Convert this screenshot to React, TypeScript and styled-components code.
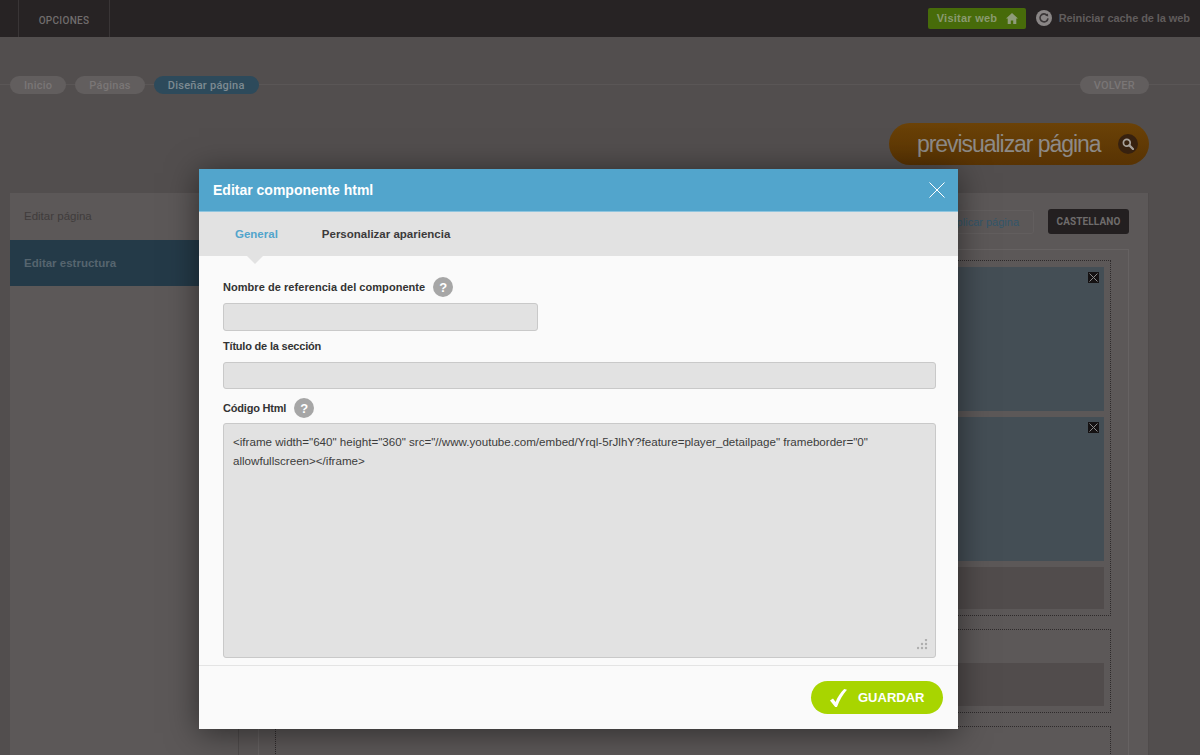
import React from "react";
import styled, { createGlobalStyle } from "styled-components";

const GlobalStyle = createGlobalStyle`
  html, body {
    margin: 0;
    padding: 0;
    height: 100%;
    overflow: hidden;
    background: #524e4e;
    font-family: "Liberation Sans", Arial, sans-serif;
  }
  * { box-sizing: border-box; }
`;

const Page = styled.div`
  position: relative;
  width: 1200px;
  height: 755px;
  overflow: hidden;
  display: flex;
  flex-direction: column;
`;

const TopBar = styled.header`
  height: 37px;
  flex: none;
  display: flex;
  align-items: center;
  justify-content: space-between;
  padding: 0 10px 0 18px;
  background: #272324;
`;

const MenuItem = styled.div`
  width: 92px;
  height: 37px;
  display: flex;
  align-items: center;
  justify-content: center;
  border-left: 1px solid #393536;
  border-right: 1px solid #393536;
  font-family: Roboto, sans-serif;
  font-size: 10px;
  font-weight: 500;
  letter-spacing: 0.3px;
  color: #716d6d;
  padding-top: 4px;
`;

const TopActions = styled.div`
  display: flex;
  align-items: center;
  margin-top: -1px;
`;

const VisitButton = styled.div`
  width: 98px;
  height: 21px;
  display: flex;
  align-items: center;
  gap: 9px;
  padding-left: 9px;
  border-radius: 2px;
  background: #476b0a;
  color: #8a9a70;
  font-size: 11px;
  font-weight: 700;
  letter-spacing: 0.25px;
`;

const CacheLink = styled.div`
  display: flex;
  align-items: center;
  gap: 7px;
  margin-left: 10px;
  color: #605c5c;
  font-size: 11px;
  font-weight: 700;
  letter-spacing: -0.08px;
`;

const Crumbs = styled.nav`
  position: relative;
  flex: none;
  height: 18px;
  margin-top: 39px;
  padding: 0 51px 0 10px;
  display: flex;
  gap: 9px;

  &::before {
    content: "";
    position: absolute;
    left: 0;
    right: 0;
    top: 8px;
    height: 1px;
    background: #5a5656;
  }
`;

const Crumb = styled.span<{ $active?: boolean; $push?: boolean }>`
  position: relative;
  height: 18px;
  padding: 0 14px;
  display: flex;
  align-items: center;
  border-radius: 9px;
  font-family: Roboto, sans-serif;
  font-size: 11px;
  font-weight: 500;
  letter-spacing: 0.25px;
  background: ${(p) => (p.$active ? "#2d4a5b" : "#625e5e")};
  color: ${(p) => (p.$active ? "#7d8a92" : "#7a7676")};
  margin-left: ${(p) => (p.$push ? "auto" : "0")};
`;

const PreviewRow = styled.div`
  flex: none;
  margin-top: 29px;
  padding-right: 51px;
  display: flex;
  justify-content: flex-end;
`;

const PreviewButton = styled.div`
  width: 260px;
  height: 42px;
  display: flex;
  align-items: center;
  justify-content: space-between;
  padding: 0 11px 0 28px;
  border-radius: 21px;
  background: linear-gradient(#6b4207, #583303);
  color: #8d8a87;
  font-size: 23px;
  letter-spacing: -1.05px;
`;

const SearchBadge = styled.span`
  width: 20px;
  height: 20px;
  display: flex;
  align-items: center;
  justify-content: center;
  border-radius: 50%;
  background: #37210f;
`;

const Panel = styled.section`
  flex: 1;
  display: flex;
  margin: 28px 51px 0 10px;
  background: #5c5858;
  border-right: 1px solid #4f4b4b;
`;

const SideNav = styled.aside`
  width: 228px;
  flex: none;
`;

const SideItem = styled.div<{ $active?: boolean }>`
  height: 46.5px;
  display: flex;
  align-items: center;
  padding-left: 14px;
  font-size: 11.5px;
  font-weight: ${(p) => (p.$active ? 700 : 400)};
  background: ${(p) => (p.$active ? "#243a48" : "transparent")};
  color: ${(p) => (p.$active ? "#56656f" : "#403c3c")};
`;

const Content = styled.div`
  flex: 1;
  border-left: 1px solid #4f4b4b;
  padding: 16px 19px 0 19px;
`;

const Toolbar = styled.div`
  height: 25px;
  display: flex;
  justify-content: flex-end;
  gap: 14px;
`;

const DuplicateButton = styled.div`
  width: 92px;
  height: 24px;
  margin-top: 1px;
  padding-right: 14px;
  display: flex;
  align-items: center;
  justify-content: flex-end;
  border: 1px solid #625e5e;
  border-radius: 3px;
  color: #33566a;
  font-size: 11px;
  white-space: nowrap;
  overflow: hidden;
`;

const LangButton = styled.div`
  width: 81px;
  height: 25px;
  display: flex;
  align-items: center;
  justify-content: center;
  border-radius: 3px;
  background: #231f20;
  color: #6f6c6c;
  font-family: Roboto, sans-serif;
  font-size: 10px;
  font-weight: 700;
  letter-spacing: 0.1px;
`;

const Frame = styled.div`
  margin-top: 15px;
  height: 520px;
  border: 1px solid #666262;
  border-bottom: 0;
  padding: 10px 17px 0 16px;
  display: flex;
  flex-direction: column;
  gap: 13px;
`;

const Section = styled.div<{ $top?: number }>`
  flex: none;
  border: 1px dotted #2e2a2b;
  padding: ${(p) => p.$top ?? 6}px 6px 6px 6px;
  display: flex;
  flex-direction: column;
  gap: 6px;
  min-height: 40px;
`;

const Block = styled.div<{ $h: number; $blue?: boolean }>`
  position: relative;
  height: ${(p) => p.$h}px;
  background: ${(p) => (p.$blue ? "#444e55" : "#514c4c")};
`;

const BlockClose = styled.span`
  position: absolute;
  top: 5px;
  right: 5px;
  width: 11px;
  height: 11px;
  display: flex;
  align-items: center;
  justify-content: center;
  background: #151213;
`;

const Modal = styled.div`
  position: absolute;
  left: 199px;
  top: 169px;
  width: 759px;
  height: 560px;
  display: flex;
  flex-direction: column;
  background: #fafafa;
  box-shadow: 0 4px 30px rgba(0, 0, 0, 0.5);
`;

const ModalHeader = styled.div`
  height: 43px;
  flex: none;
  display: flex;
  align-items: center;
  justify-content: space-between;
  padding: 0 13px 1px 14px;
  background: #52a5cc;
  border-bottom: 1px solid #8fc5df;
  color: #fff;
  font-size: 14px;
  font-weight: 700;
`;

const Tabs = styled.div`
  position: relative;
  height: 44px;
  flex: none;
  display: flex;
  align-items: center;
  gap: 44px;
  padding: 0 0 1px 36px;
  background: #e2e2e2;

  &::after {
    content: "";
    position: absolute;
    left: 48px;
    top: 100%;
    border-style: solid;
    border-width: 8px 8px 0 8px;
    border-color: #e2e2e2 transparent transparent transparent;
  }
`;

const Tab = styled.span<{ $active?: boolean }>`
  font-size: 11.5px;
  font-weight: 700;
  color: ${(p) => (p.$active ? "#52a5cc" : "#3c3a3b")};
`;

const ModalBody = styled.div`
  flex: 1;
  display: flex;
  flex-direction: column;
  padding: 21px 22px 0 24px;
`;

const LabelRow = styled.div<{ $gap?: number }>`
  height: 20px;
  flex: none;
  display: flex;
  align-items: center;
  gap: 8px;
  margin-top: ${(p) => p.$gap ?? 0}px;
`;

const Label = styled.label<{ $tight?: boolean }>`
  font-size: 11px;
  font-weight: 700;
  letter-spacing: ${(p) => (p.$tight ? "-0.2px" : "0.05px")};
  color: #333;
`;

const HelpIcon = styled.span`
  width: 20px;
  height: 20px;
  display: flex;
  align-items: center;
  justify-content: center;
  border-radius: 50%;
  background: #a6a6a6;
  color: #fff;
  font-size: 13px;
  font-weight: 700;
`;

const TextInput = styled.input<{ $short?: boolean }>`
  display: block;
  flex: none;
  width: ${(p) => (p.$short ? "315px" : "713px")};
  height: ${(p) => (p.$short ? "28px" : "27px")};
  margin: 6px 0 0;
  padding: 0 10px;
  background: #e2e2e2;
  border: 1px solid #c9c9c9;
  border-radius: 3px;
  outline: none;
`;

const CodeWrap = styled.div`
  position: relative;
  flex: none;
  width: 713px;
  height: 235px;
  margin-top: 5px;
`;

const CodeArea = styled.textarea`
  display: block;
  width: 100%;
  height: 100%;
  padding: 8px 9px;
  resize: none;
  overflow: hidden;
  background: #e2e2e2;
  border: 1px solid #c9c9c9;
  border-radius: 3px;
  outline: none;
  font-family: "Liberation Sans", Arial, sans-serif;
  font-size: 11.6px;
  line-height: 19px;
  color: #3c3c3c;
`;

const Grip = styled.svg`
  position: absolute;
  right: 8px;
  bottom: 8px;
`;

const ModalFooter = styled.div`
  height: 64px;
  flex: none;
  display: flex;
  justify-content: flex-end;
  padding: 15px 15px 0 0;
  border-top: 1px solid #e4e4e4;
`;

const SaveButton = styled.button`
  width: 132px;
  height: 33px;
  display: flex;
  align-items: center;
  gap: 11px;
  padding: 0 0 0 19px;
  border: 0;
  border-radius: 17px;
  background: #a8d500;
  color: #fff;
  font-family: "Liberation Sans", Arial, sans-serif;
  font-size: 13px;
  font-weight: 700;
`;

const HomeIcon = () => (
  <svg width="12" height="11" viewBox="0 0 12 11">
    <path d="M6 0 L12 5.6 H10.3 V11 H7.2 V7.4 H4.8 V11 H1.7 V5.6 H0 Z" fill="#8f9c7b" />
  </svg>
);

const RefreshIcon = () => (
  <svg width="16" height="16" viewBox="0 0 16 16">
    <circle cx="8" cy="8" r="8" fill="#8a8686" />
    <path d="M11 5.2 A4 4 0 1 0 12 8.4" fill="none" stroke="#3a3637" strokeWidth="1.6" />
    <path d="M9.2 5.6 L12.2 6.4 L12 3.4 Z" fill="#3a3637" />
  </svg>
);

const SearchIcon = () => (
  <svg width="12" height="12" viewBox="0 0 12 12">
    <circle cx="4.8" cy="4.8" r="3.4" fill="none" stroke="#a8a29c" strokeWidth="1.7" />
    <path d="M7.4 7.4 L11 11" stroke="#a8a29c" strokeWidth="2.2" strokeLinecap="round" />
  </svg>
);

const CrossIcon = ({ size, color }: { size: number; color: string }) => (
  <svg width={size} height={size} viewBox={`0 0 ${size} ${size}`}>
    <path d={`M0.5 0.5 L${size - 0.5} ${size - 0.5} M${size - 0.5} 0.5 L0.5 ${size - 0.5}`} stroke={color} strokeWidth="1" />
  </svg>
);

const CheckIcon = () => (
  <svg width="17" height="18" viewBox="0 0 17 18">
    <path d="M0 11.5 L3 9.4 L5.6 13 C7.6 8 10.6 3.6 14.2 0 L17 0.8 C12.8 5.6 9.6 11 7 18 H5.2 Z" fill="#fff" />
  </svg>
);

const ResizeGrip = () => (
  <Grip width="11" height="11" viewBox="0 0 11 11">
    {[
      [9, 1],
      [5, 5],
      [9, 5],
      [1, 9],
      [5, 9],
      [9, 9],
    ].map(([cx, cy]) => (
      <circle key={`${cx}-${cy}`} cx={cx} cy={cy} r="1.2" fill="#aeaeae" />
    ))}
  </Grip>
);

const codeValue =
  '<iframe width="640" height="360" src="//www.youtube.com/embed/Yrql-5rJlhY?feature=player_detailpage" frameborder="0" allowfullscreen></iframe>';

const App = () => {
  return (
    <Page>
      <GlobalStyle />
      <TopBar>
        <MenuItem>OPCIONES</MenuItem>
        <TopActions>
          <VisitButton>
            Visitar web
            <HomeIcon />
          </VisitButton>
          <CacheLink>
            <RefreshIcon />
            Reiniciar cache de la web
          </CacheLink>
        </TopActions>
      </TopBar>

      <Crumbs>
        <Crumb>Inicio</Crumb>
        <Crumb>Páginas</Crumb>
        <Crumb $active>Diseñar página</Crumb>
        <Crumb $push>VOLVER</Crumb>
      </Crumbs>

      <PreviewRow>
        <PreviewButton>
          previsualizar página
          <SearchBadge>
            <SearchIcon />
          </SearchBadge>
        </PreviewButton>
      </PreviewRow>

      <Panel>
        <SideNav>
          <SideItem>Editar página</SideItem>
          <SideItem $active>Editar estructura</SideItem>
        </SideNav>
        <Content>
          <Toolbar>
            <DuplicateButton>Duplicar página</DuplicateButton>
            <LangButton>CASTELLANO</LangButton>
          </Toolbar>
          <Frame>
            <Section>
              <Block $h={144} $blue>
                <BlockClose>
                  <CrossIcon size={9} color="#8a8a8a" />
                </BlockClose>
              </Block>
              <Block $h={144} $blue>
                <BlockClose>
                  <CrossIcon size={9} color="#8a8a8a" />
                </BlockClose>
              </Block>
              <Block $h={42} />
            </Section>
            <Section $top={33}>
              <Block $h={43} />
            </Section>
            <Section />
          </Frame>
        </Content>
      </Panel>

      <Modal>
        <ModalHeader>
          Editar componente html
          <CrossIcon size={16} color="#fff" />
        </ModalHeader>
        <Tabs>
          <Tab $active>General</Tab>
          <Tab>Personalizar apariencia</Tab>
        </Tabs>
        <ModalBody>
          <LabelRow>
            <Label>Nombre de referencia del componente</Label>
            <HelpIcon>?</HelpIcon>
          </LabelRow>
          <TextInput $short />
          <LabelRow $gap={5}>
            <Label $tight>Título de la sección</Label>
          </LabelRow>
          <TextInput />
          <LabelRow $gap={9}>
            <Label $tight>Código Html</Label>
            <HelpIcon>?</HelpIcon>
          </LabelRow>
          <CodeWrap>
            <CodeArea readOnly value={codeValue} />
            <ResizeGrip />
          </CodeWrap>
        </ModalBody>
        <ModalFooter>
          <SaveButton>
            <CheckIcon />
            GUARDAR
          </SaveButton>
        </ModalFooter>
      </Modal>
    </Page>
  );
};

export default App;
